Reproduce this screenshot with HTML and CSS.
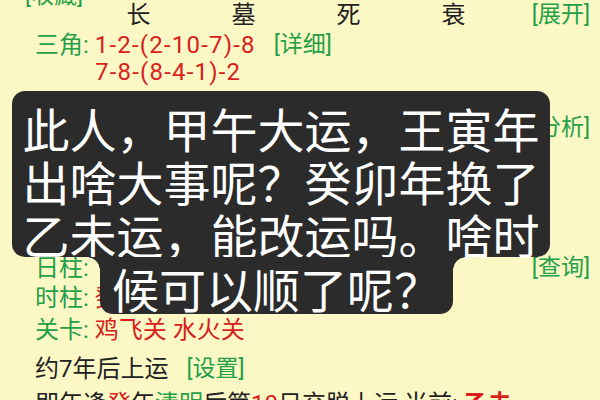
FILE: index.html
```html
<!DOCTYPE html>
<html lang="zh">
<head>
<meta charset="utf-8">
<link rel="stylesheet" href="styles.css">
</head>
<body>
<div class="page">
  <div class="row r-a"><span class="link">[收藏]</span></div>
  <div class="row r-b">
    <div class="stages">
      <span class="stage">长</span><span class="stage">墓</span><span class="stage">死</span><span class="stage">衰</span>
    </div>
    <span class="link">[展开]</span>
  </div>
  <div class="row r-c">
    <span class="label">三角:</span><span class="red num">1-2-(2-10-7)-8</span><span class="link gap">[详细]</span>
  </div>
  <div class="row r-d"><span class="red num indent">7-8-(8-4-1)-2</span></div>
  <div class="row r-f spread"><span class="label">格局:</span><span class="link">[分析]</span></div>
  <div class="row r-h"><span class="label">年柱:</span><span class="red">壬申</span></div>
  <div class="row r-i"><span class="label">月柱:</span><span class="red">丙午</span></div>
  <div class="row r-j spread"><span class="label">日柱:</span><span class="link">[查询]</span></div>
  <div class="row r-k"><span class="label">时柱:</span><span class="red">癸卯</span></div>
  <div class="row r-l"><span class="label">关卡:</span><span class="red">鸡飞关 水火关</span></div>
  <div class="row r-m"><span class="plain">约7年后上运</span><span class="link gap">[设置]</span></div>
  <div class="row r-n"><span class="plain">即年逢<span class="red">癸</span>年<span class="green">清明</span>后第<span class="red">10</span>日交脱上运 当前: <b class="red bold">乙未</b></span></div>
</div>

<div class="bubble">
  <div class="bub-top">此人，甲午大运，王寅年<br>出啥大事呢？癸卯年换了<br>乙未运，能改运吗。啥时</div>
  <div class="bub-bot">候可以顺了呢？</div>
</div>
</body>
</html>
```

FILE: styles.css
```css
html, body {
  margin: 0;
  padding: 0;
}
body {
  width: 600px;
  height: 400px;
  overflow: hidden;
  background: #fcf8c6;
  font-family: "Roboto", "Noto Sans CJK SC", sans-serif;
  font-size: 24px;
  color: #222;
  position: relative;
}
.page {
  display: flex;
  flex-direction: column;
  padding: 0 10px 0 35px;
}
.row {
  display: flex;
  align-items: center;
  height: 26px;
  line-height: 26px;
  white-space: nowrap;
}
.spread { justify-content: space-between; }
.r-a { margin-top: -17px; margin-left: -10px; }
.r-b { margin-top: -7px; justify-content: space-between; }
.r-c { margin-top: 4px; }
.r-d { margin-top: 1px; }
.r-f { margin-top: 30px; }
.r-h { margin-top: 54px; }
.r-i { margin-top: 4px; }
.r-j { margin-top: 4px; }
.r-k { margin-top: 4px; }
.r-l { margin-top: 6px; }
.r-m { margin-top: 13px; }
.r-n { margin-top: 9px; }

.stages {
  display: flex;
  padding-left: 51px;
}
.stage {
  width: 105px;
  text-align: center;
  color: #222;
}
.label {
  color: #23a048;
  margin-right: 6px;
}
.link {
  color: #23a048;
  font-size: 23px;
}
.gap { margin-left: 18px; }
.red { color: #d8201c; }
.green { color: #23a048; }
.bold { font-weight: 700; }
.num { letter-spacing: 1.2px; }
.indent { margin-left: 60px; }
.plain { color: #222; }

.bubble {
  position: absolute;
  left: 12px;
  top: 91px;
  font-family: "Noto Sans CJK SC", sans-serif;
  font-size: 47px;
  line-height: 53px;
  color: #fff;
  text-align: center;
  white-space: nowrap;
}
.bub-top {
  width: 538px;
  height: 156px;
  padding-top: 10px;
  background: #2b2b2b;
  border-radius: 13px;
}
.bub-bot {
  position: relative;
  width: 353px;
  height: 53px;
  padding-top: 4px;
  margin-left: 88px;
  background: #2b2b2b;
  border-radius: 0 0 13px 13px;
}
.bub-bot::before,
.bub-bot::after {
  content: "";
  position: absolute;
  top: 0;
  width: 13px;
  height: 13px;
}
.bub-bot::before {
  left: -13px;
  background: radial-gradient(circle at 0 100%, transparent 12.5px, #2b2b2b 13px);
}
.bub-bot::after {
  right: -13px;
  background: radial-gradient(circle at 100% 100%, transparent 12.5px, #2b2b2b 13px);
}
```
